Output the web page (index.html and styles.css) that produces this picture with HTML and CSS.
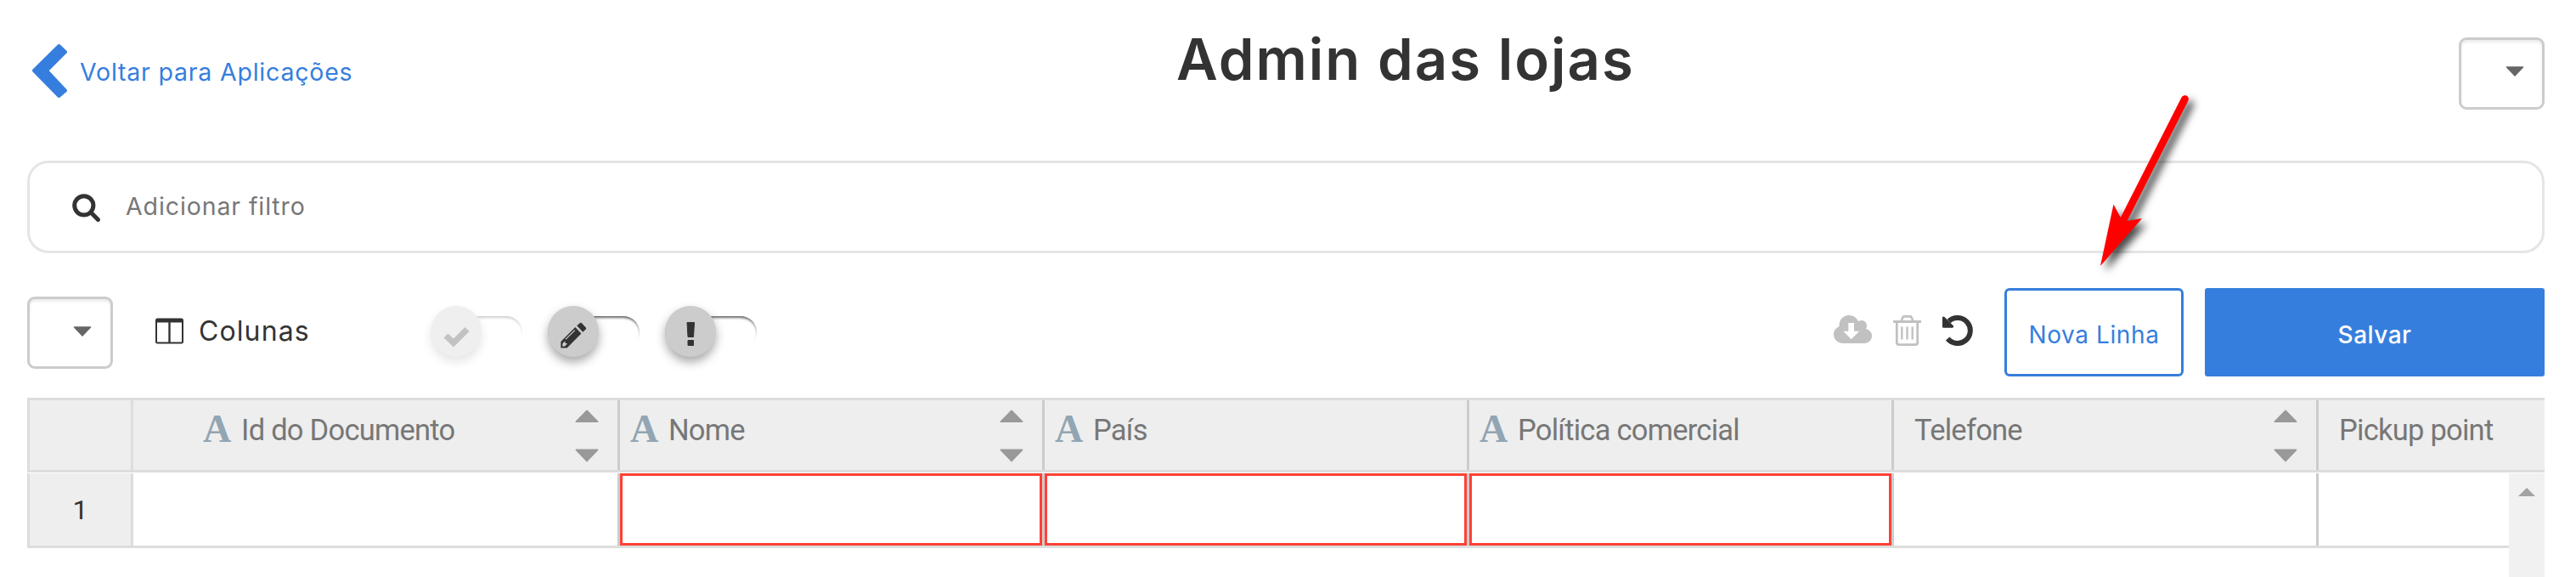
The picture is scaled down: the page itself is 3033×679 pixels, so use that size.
FILE: index.html
```html
<!DOCTYPE html>
<html lang="pt-BR">
<head>
<meta charset="utf-8">
<title>Admin das lojas</title>
<link rel="stylesheet" href="styles.css">
</head>
<body>
<main class="page">
  <header class="topbar">
    <a class="back">
      <svg class="back-icon" width="41" height="63" viewBox="0 0 41 63"><path d="M31.4 2 L39 9.2 L17 31 L39 54.5 L31.4 61 L2 31 Z" fill="#367edd" stroke="#367edd" stroke-width="4" stroke-linejoin="round"/></svg>
      <span class="back-label">Voltar para Aplicações</span>
    </a>
    <h1 class="title">Admin das lojas</h1>
    <button class="select select-account"><svg class="caret" width="22" height="12" viewBox="0 0 22 12"><path d="M1.5 1 H20.5 L11 11 Z" fill="#666" stroke="#666" stroke-width="1.5" stroke-linejoin="round"/></svg></button>
  </header>

  <div class="filter">
    <svg width="34" height="34" viewBox="0 0 34 34"><circle cx="13.8" cy="13.8" r="11.1" fill="none" stroke="#333" stroke-width="5"/><path d="M22.5 22.5 L30.4 30.4" stroke="#333" stroke-width="5" stroke-linecap="round"/></svg>
    <span class="filter-label">Adicionar filtro</span>
  </div>

  <div class="toolbar">
    <button class="select select-size"><svg class="caret" width="22" height="12" viewBox="0 0 22 12"><path d="M1.5 1 H20.5 L11 11 Z" fill="#666" stroke="#666" stroke-width="1.5" stroke-linejoin="round"/></svg></button>
    <div class="columns">
      <svg width="33" height="31" viewBox="0 0 33 31"><rect x="1" y="1.5" width="31" height="28" rx="1.5" fill="none" stroke="#333" stroke-width="2"/><path d="M1 1 H32 V5.5 H1 Z" fill="#333"/><path d="M16.5 5 V29" stroke="#333" stroke-width="2.4"/></svg>
      <span class="columns-label">Colunas</span>
    </div>
    <div class="toggles">
      <div class="toggle toggle-off"><span class="knob"><svg width="60" height="60" viewBox="0 0 60 60"><path d="M18 35 L27 43.5 L43 27.5" fill="none" stroke="#444" stroke-width="7.2" stroke-linejoin="miter"/></svg></span></div>
      <div class="toggle"><span class="knob"><svg width="60" height="60" viewBox="0 0 60 60"><g fill="#333"><path d="M34.2 23.2 L38 19.9 Q39.2 19.4 40.2 20.4 L44.8 25.4 Q45.6 26.4 44.7 27.4 L41.3 30.7 Z"/><path d="M32.3 25 L39.4 32.4 L22.6 49.6 H15.3 V41.9 Z"/></g><path d="M18 43.4 L17.3 45 V47.4 H20 L23 44.3 L20.5 43.7 L20.3 41.5 Z" fill="#ccc"/><path d="M20.8 39.4 L31.8 28.6" stroke="#ccc" stroke-width="1.3"/></svg></span></div>
      <div class="toggle"><span class="knob"><svg width="60" height="60" viewBox="0 0 60 60"><path d="M26 19.5 H34.5 L33.5 36.5 H27 Z M27 40.5 H33.5 V46.5 H27 Z" fill="#333" stroke="#333" stroke-linejoin="round"/></svg></span></div>
    </div>
    <div class="actions">
      <svg class="cloud" width="45" height="34" viewBox="0 0 45 34"><path d="M11 33 C5 33 0 28.5 0 22.5 C0 18 2.5 14.7 6.6 12.9 C6 5.5 11 0 18 0 C23 0 27 2.8 29 7.2 C33.5 4.2 39 7.4 39 12.3 C39 14 38.5 15.2 37.9 16 C42 16.8 45 20.3 45 24.3 C45 29.3 41 33 36 33 Z" fill="#c1c1c1"/><path d="M17.3 9 H24 V18.7 H30.2 L20.7 28.2 L11.3 18.7 H17.3 Z" fill="#fff"/></svg>
      <svg class="trash" width="33" height="36" viewBox="0 0 33 36"><g fill="none" stroke="#c1c1c1"><path d="M0 7.5 H33" stroke-width="2.8"/><path d="M9.5 7 L11.5 2.2 Q12 1.4 13 1.4 H20 Q21 1.4 21.5 2.2 L23.5 7" stroke-width="2.6"/><path d="M4.3 8 V31.5 Q4.3 34.6 7 34.6 H26 Q28.7 34.6 28.7 31.5 V8" stroke-width="2.8"/><path d="M10.3 13.5 V28.5 M16.5 13.5 V28.5 M22.7 13.5 V28.5" stroke-width="2.4"/></g></svg>
      <svg class="undo" width="36" height="36" viewBox="0 0 36 36"><path d="M6.2 27.5 A15 15 0 1 0 7.6 7" fill="none" stroke="#333" stroke-width="6"/><path d="M0 2.3 Q.8 .8 2.2 1.8 L13 12.6 Q13.6 14.2 12 14.8 H1.2 Q0 14.6 0 13.4 Z" fill="#333"/></svg>
      <button class="btn btn-new">Nova Linha</button>
      <button class="btn btn-save">Salvar</button>
    </div>
  </div>

  <section class="grid">
    <div class="head">
      <div class="cell corner"></div>
      <div class="cell doc"><i class="type">A</i><span>Id do Documento</span><svg class="sort" width="28" height="62" viewBox="0 0 28 62"><path d="M14 1.5 L26.5 14.2 H1.5 Z M1.5 47.5 H26.5 L14 60.5 Z" fill="#999" stroke="#999" stroke-width="1.8" stroke-linejoin="round"/></svg></div>
      <div class="cell"><i class="type">A</i><span>Nome</span><svg class="sort" width="28" height="62" viewBox="0 0 28 62"><path d="M14 1.5 L26.5 14.2 H1.5 Z M1.5 47.5 H26.5 L14 60.5 Z" fill="#999" stroke="#999" stroke-width="1.8" stroke-linejoin="round"/></svg></div>
      <div class="cell"><i class="type">A</i><span>País</span></div>
      <div class="cell"><i class="type">A</i><span>Política comercial</span></div>
      <div class="cell plain"><span>Telefone</span><svg class="sort" width="28" height="62" viewBox="0 0 28 62"><path d="M14 1.5 L26.5 14.2 H1.5 Z M1.5 47.5 H26.5 L14 60.5 Z" fill="#999" stroke="#999" stroke-width="1.8" stroke-linejoin="round"/></svg></div>
      <div class="cell plain last"><span>Pickup point</span></div>
    </div>
    <div class="body">
      <div class="row">
        <div class="cell corner num">1</div>
        <div class="cell"></div>
        <div class="cell"><div class="invalid"></div></div>
        <div class="cell"><div class="invalid"></div></div>
        <div class="cell"><div class="invalid"></div></div>
        <div class="cell"></div>
        <div class="cell last"></div>
      </div>
      <div class="scrollbar"><svg width="20" height="10" viewBox="0 0 20 10"><path d="M10 0 L20 10 H0 Z" fill="#a3a3a3"/></svg></div>
    </div>
  </section>

  <svg class="pointer" width="160" height="240" viewBox="0 0 160 240"><path d="M33 223 L48.5 150.5 L56.8 166 L128.6 24.6 A4.2 4.2 0 0 1 136.4 28.4 L64.5 170 L82 167 Z" fill="#f00"/></svg>
</main>
</body>
</html>
```

FILE: styles.css
```css
* { box-sizing: border-box; }
body { margin: 0; background: #fff; color: #333; font-family: Inter, Roboto, "Liberation Sans", sans-serif; }
button { font: inherit; margin: 0; padding: 0; }
svg { display: block; flex: none; }
.page { position: relative; width: 3033px; height: 679px; padding: 0 37px 0 32px; overflow: hidden; }

.topbar { display: flex; align-items: flex-start; height: 189px; }
.back { display: flex; align-items: flex-start; width: 1353px; padding: 52px 0 0 6px; color: #367edd; }
.back-label { margin: 15px 0 0 15px; font-size: 28.5px; line-height: 36px; letter-spacing: 0.8px; white-space: nowrap; }
.title { margin: 29px 0 0; font-size: 67px; line-height: 82px; font-weight: 600; letter-spacing: 1.95px; white-space: nowrap; }
.select { display: flex; align-items: center; justify-content: flex-end; width: 101px; height: 85px; padding: 0 21px 5px 0; border: 3px solid #ccc; border-radius: 9px; background: #fff; box-shadow: inset 0 3px 3px rgba(0,0,0,.075); }
.select-account { margin: 44px 0 0 auto; }
.select-size { padding-right: 22px; padding-bottom: 3px; }

.filter { display: flex; align-items: center; height: 109px; padding: 2px 0 0 50px; border: 3px solid #e5e5e5; border-radius: 25px; }
.filter-label { margin: -4px 0 0 29px; font-size: 28.5px; line-height: 36px; letter-spacing: 0.9px; color: #777; }

.toolbar { display: flex; align-items: flex-start; height: 170px; padding-top: 41px; }
.select-size { margin-top: 10px; }
.columns { display: flex; align-items: center; width: 374px; margin-top: 30px; padding-left: 50px; height: 40px; }
.columns-label { margin: 2px 0 0 18px; font-size: 32px; line-height: 40px; letter-spacing: 1.1px; }
.toggles { display: flex; gap: 30px; margin-top: 21px; }
.toggle { width: 108px; height: 38px; margin-top: 12px; border-radius: 19px; box-shadow: inset 0 3px 3px -1px #666; }
.knob { display: block; width: 60px; height: 60px; margin-top: -12px; border-radius: 50%; background: #ccc; box-shadow: 0 6px 12px rgba(0,0,0,.35); }
.toggle-off { opacity: .3; }
.toggle-off .knob { position: relative; }
.toggle-off svg path { stroke: #3a3a3a; }
.actions { display: flex; align-items: flex-start; margin-left: auto; }
.cloud, .trash, .undo { margin-top: 32px; }
.trash { margin-left: 25px; }
.undo { margin-left: 25px; }
.btn { height: 104px; font-size: 28px; line-height: 36px; text-align: center; padding-top: 5px; }
.btn-new { width: 211px; margin-left: 37px; border: 3px solid #367edd; border-radius: 6px; background: #fff; color: #367edd; letter-spacing: 0.6px; }
.btn-save { width: 400px; margin-left: 25px; border: 0; border-radius: 3px; background: #367edd; color: #fff; font-weight: 500; letter-spacing: 0.5px; }

.head, .row { display: grid; grid-template-columns: 125px 573px 500px 500px 500px 500px 1fr; }
.head { height: 88px; border-top: 3px solid #ddd; border-bottom: 3px solid #ddd; background: #eee; }
.cell { display: flex; min-width: 0; border-right: 3px solid #ccc; }
.head .cell { padding-left: 12px; font-family: Roboto, sans-serif; font-size: 34.5px; line-height: 40px; letter-spacing: -0.75px; color: #777; white-space: nowrap; }
.head .cell span { margin: 15px 0 0 12px; }
.head .doc { padding-left: 82px; }
.head .plain { padding-left: 12px; }
.cell.last { border-right: 0; }
.head .corner, .row .corner { padding: 0; border-left: 3px solid #ddd; border-right-color: #ddd; }
.type { width: 33px; margin-top: 11px; font: bold 46px/46px "Liberation Serif", serif; letter-spacing: 0; color: #92a5b3; }
.sort { margin: 11px 22px 0 auto; }
.body { display: flex; height: 123px; padding-top: 1px; }
.row { flex: 1; height: 88px; border-bottom: 3px solid #ddd; }
.num { align-items: center; justify-content: center; background: #eee; color: #333; font-family: Roboto, sans-serif; font-weight: 400; font-size: 32px; }
.invalid { flex: 1; border: 3px solid #ff4136; }
.scrollbar { display: flex; justify-content: center; width: 42px; height: 122px; padding-top: 17px; background: #f1f1f1; }

/* annotation drawn over the page */
.pointer { position: absolute; left: 2440px; top: 90px; overflow: visible; filter: drop-shadow(6px 6px 5px rgba(0,0,0,.7)); }
```
